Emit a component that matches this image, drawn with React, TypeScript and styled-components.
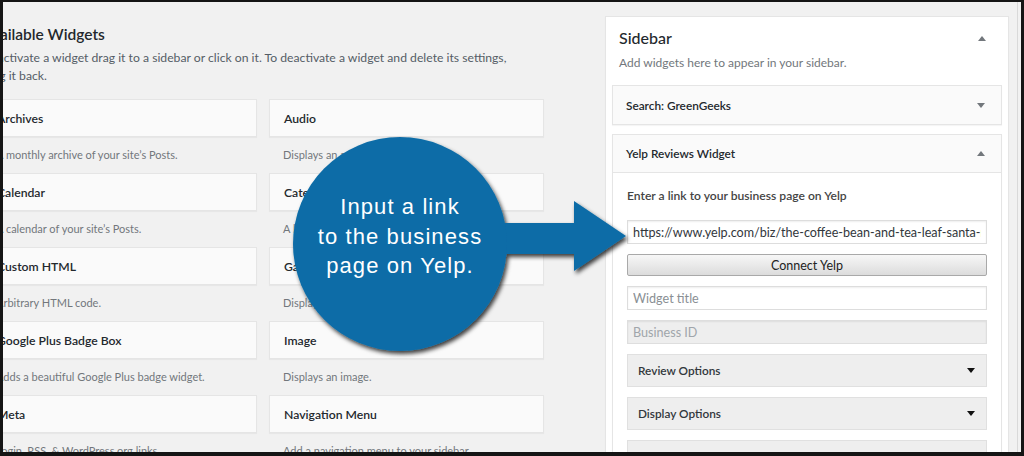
import React from "react";
import styled, { createGlobalStyle } from "styled-components";

const Global = createGlobalStyle`
  html, body { margin: 0; padding: 0; background: #141414; }
  body { font-family: Lato, "Noto Sans", sans-serif; }
  * { box-sizing: border-box; }
`;

const Frame = styled.div`
  position: relative;
  width: 1024px;
  height: 456px;
  border-style: solid;
  border-color: #151515;
  border-width: 2px 3px 4px 3px;
  background: #f1f1f1;
  overflow: hidden;
  display: flex;
  align-items: flex-start;
`;

/* ---------- Available widgets column ---------- */

const Available = styled.section`
  flex: 0 0 562px;
  margin-left: -21px;
  color: #23282d;
`;

const Heading = styled.h2`
  margin: 22px 0 0;
  font-size: 15.5px;
  line-height: 20px;
  font-weight: 600;
  color: #23282d;
`;

const Intro = styled.p`
  margin: 5px 0 0;
  font-size: 12.2px;
  line-height: 18px;
  color: #555d66;
`;

const Grid = styled.div`
  margin-top: 14px;
  display: grid;
  grid-template-columns: 275px 275px;
  column-gap: 12px;
`;

const Tile = styled.div`
  display: flex;
  flex-direction: column;
`;

const TileTop = styled.div`
  height: 38px;
  border: 1px solid #e5e5e5;
  background: #fafafa;
  box-shadow: 0 1px 1px rgba(0, 0, 0, 0.04);
  display: flex;
  align-items: center;
  padding: 0 14px;
  font-size: 12.2px;
  font-weight: 600;
  color: #23282d;
`;

const TileDesc = styled.div`
  height: 36px;
  padding: 9px 14px 0;
  font-size: 11px;
  line-height: 18px;
  color: #72777c;
  white-space: nowrap;
`;

/* ---------- Sidebar panel ---------- */

const SidebarPanel = styled.section`
  flex: 0 0 404px;
  margin-left: 61px;
  margin-top: 14px;
  height: 520px;
  background: #fff;
  border: 1px solid #e5e5e5;
  box-shadow: 0 1px 1px rgba(0, 0, 0, 0.04);
`;

const PanelHead = styled.div`
  display: flex;
  align-items: center;
  justify-content: space-between;
  padding: 10px 22px 0 13px;
`;

const PanelTitle = styled.h3`
  margin: 0;
  font-size: 16px;
  line-height: 22px;
  font-weight: 500;
  color: #23282d;
`;

const PanelDesc = styled.p`
  margin: 5px 0 0;
  padding: 0 13px;
  font-size: 12px;
  line-height: 18px;
  color: #72777c;
`;

const WidgetList = styled.div`
  margin: 13px 6px 0;
  display: flex;
  flex-direction: column;
  gap: 9px;
`;

const Card = styled.div`
  border: 1px solid #e5e5e5;
  background: #fff;
  box-shadow: 0 1px 1px rgba(0, 0, 0, 0.04);
`;

const CardHead = styled.div<{ $open?: boolean }>`
  height: 38px;
  display: flex;
  align-items: center;
  justify-content: space-between;
  padding: 0 16px 0 13px;
  background: #fafafa;
  font-size: 11.8px;
  font-weight: 600;
  color: #23282d;
  border-bottom: ${(p) => (p.$open ? "1px solid #e5e5e5" : "none")};
`;

const CardBody = styled.div`
  padding: 14px 14px 0;
  display: flex;
  flex-direction: column;
  gap: 10px;
`;

const FieldLabel = styled.div`
  font-size: 12.1px;
  line-height: 18px;
  font-weight: 600;
  color: #444;
  margin-bottom: 5px;
`;

const TextInput = styled.input`
  display: block;
  width: 100%;
  height: 24px;
  margin: 0;
  padding: 0 5px;
  border: 1px solid #ddd;
  box-shadow: inset 0 1px 2px rgba(0, 0, 0, 0.07);
  background: #fff;
  font-family: Lato, "Noto Sans", sans-serif;
  font-size: 12.6px;
  color: #32373c;
  outline: none;
  &::placeholder { color: #8a8f94; }
  &:disabled { background: #eeeeee; border-color: #dedede; }
  &:disabled::placeholder { color: #a0a5aa; }
`;

const ConnectButton = styled.button`
  display: block;
  width: 100%;
  height: 22px;
  margin: 0;
  padding: 0;
  border: 1px solid #a9a9a9;
  border-radius: 2px;
  background: linear-gradient(#f7f7f7, #dcdcdc);
  font-family: Lato, "Noto Sans", sans-serif;
  font-size: 12.5px;
  color: #222;
`;

const OptionRow = styled.div`
  height: 33px;
  display: flex;
  align-items: center;
  justify-content: space-between;
  padding: 0 11px 0 10px;
  background: #eeeeee;
  border: 1px solid #e0e0e0;
  font-size: 11.8px;
  font-weight: 600;
  color: #32373c;
`;

const Caret = styled.span<{ $up?: boolean; $color: string }>`
  flex: 0 0 auto;
  width: 0;
  height: 0;
  border-left: 4px solid transparent;
  border-right: 4px solid transparent;
  ${(p) =>
    p.$up
      ? `border-bottom: 5px solid ${p.$color};`
      : `border-top: 5px solid ${p.$color};`}
`;

const EdgeRule = styled.div`
  flex: 0 0 1px;
  align-self: stretch;
  margin-left: 8px;
  background: #d9d9d9;
`;

/* ---------- Callout overlay ---------- */

const Callout = styled.div`
  position: absolute;
  left: 282px;
  top: 128px;
  width: 350px;
  height: 235px;
  pointer-events: none;
`;

const CalloutArt = styled.svg`
  position: absolute;
  inset: 0;
  overflow: visible;
`;

const CalloutText = styled.div`
  position: absolute;
  left: 15px;
  top: 62px;
  width: 200px;
  font-family: "Liberation Sans", Arial, sans-serif;
  font-size: 22px;
  letter-spacing: 1.1px;
  line-height: 29.5px;
  text-align: center;
  color: #fff;
`;

const leftCol = [
  ["Archives", "A monthly archive of your site\u2019s Posts."],
  ["Calendar", "A calendar of your site\u2019s Posts."],
  ["Custom HTML", "Arbitrary HTML code."],
  ["Google Plus Badge Box", "Adds a beautiful Google Plus badge widget."],
  ["Meta", "Login, RSS, & WordPress.org links."],
];
const rightCol = [
  ["Audio", "Displays an audio player."],
  ["Categories", "A list or dropdown of categories."],
  ["Gallery", "Displays an image gallery."],
  ["Image", "Displays an image."],
  ["Navigation Menu", "Add a navigation menu to your sidebar."],
];

const tiles: string[][] = [];
leftCol.forEach((l, i) => {
  tiles.push(l);
  tiles.push(rightCol[i]);
});

export default function App() {
  return (
    <>
      <Global />
      <Frame>
        <Available>
          <Heading>Available Widgets</Heading>
          <Intro>
            To activate a widget drag it to a sidebar or click on it. To deactivate a widget and delete its settings,
            <br />
            drag it back.
          </Intro>
          <Grid>
            {tiles.map(([name, desc]) => (
              <Tile key={name}>
                <TileTop>{name}</TileTop>
                <TileDesc>{desc}</TileDesc>
              </Tile>
            ))}
          </Grid>
        </Available>

        <SidebarPanel>
          <PanelHead>
            <PanelTitle>Sidebar</PanelTitle>
            <Caret $up $color="#72777c" />
          </PanelHead>
          <PanelDesc>Add widgets here to appear in your sidebar.</PanelDesc>
          <WidgetList>
            <Card>
              <CardHead>
                <span>Search: GreenGeeks</span>
                <Caret $color="#72777c" />
              </CardHead>
            </Card>
            <Card>
              <CardHead $open>
                <span>Yelp Reviews Widget</span>
                <Caret $up $color="#72777c" />
              </CardHead>
              <CardBody>
                <FieldLabel>Enter a link to your business page on Yelp</FieldLabel>
                <TextInput readOnly defaultValue="https://www.yelp.com/biz/the-coffee-bean-and-tea-leaf-santa-monica" />
                <ConnectButton type="button">Connect Yelp</ConnectButton>
                <TextInput placeholder="Widget title" />
                <TextInput disabled placeholder="Business ID" />
                <OptionRow>
                  <span>Review Options</span>
                  <Caret $color="#111" />
                </OptionRow>
                <OptionRow>
                  <span>Display Options</span>
                  <Caret $color="#111" />
                </OptionRow>
                <OptionRow>
                  <span>Advanced Options</span>
                  <Caret $color="#111" />
                </OptionRow>
              </CardBody>
            </Card>
          </WidgetList>
        </SidebarPanel>
        <EdgeRule />

        <Callout>
          <CalloutArt viewBox="285 130 350 235" width="350" height="235">
            <defs>
              <filter id="callout-shadow" x="-20%" y="-20%" width="140%" height="140%">
                <feDropShadow dx="2" dy="3" stdDeviation="2" floodColor="#000" floodOpacity="0.75" />
              </filter>
            </defs>
            <g filter="url(#callout-shadow)" fill="#0b6ca7">
              <polygon points="480,223 574,223 574,201 626,236 574,271 574,254 480,254" />
              <circle cx="400" cy="244" r="107" />
            </g>
          </CalloutArt>
          <CalloutText>
            Input a link
            <br />
            to the business
            <br />
            page on Yelp.
          </CalloutText>
        </Callout>
      </Frame>
    </>
  );
}
